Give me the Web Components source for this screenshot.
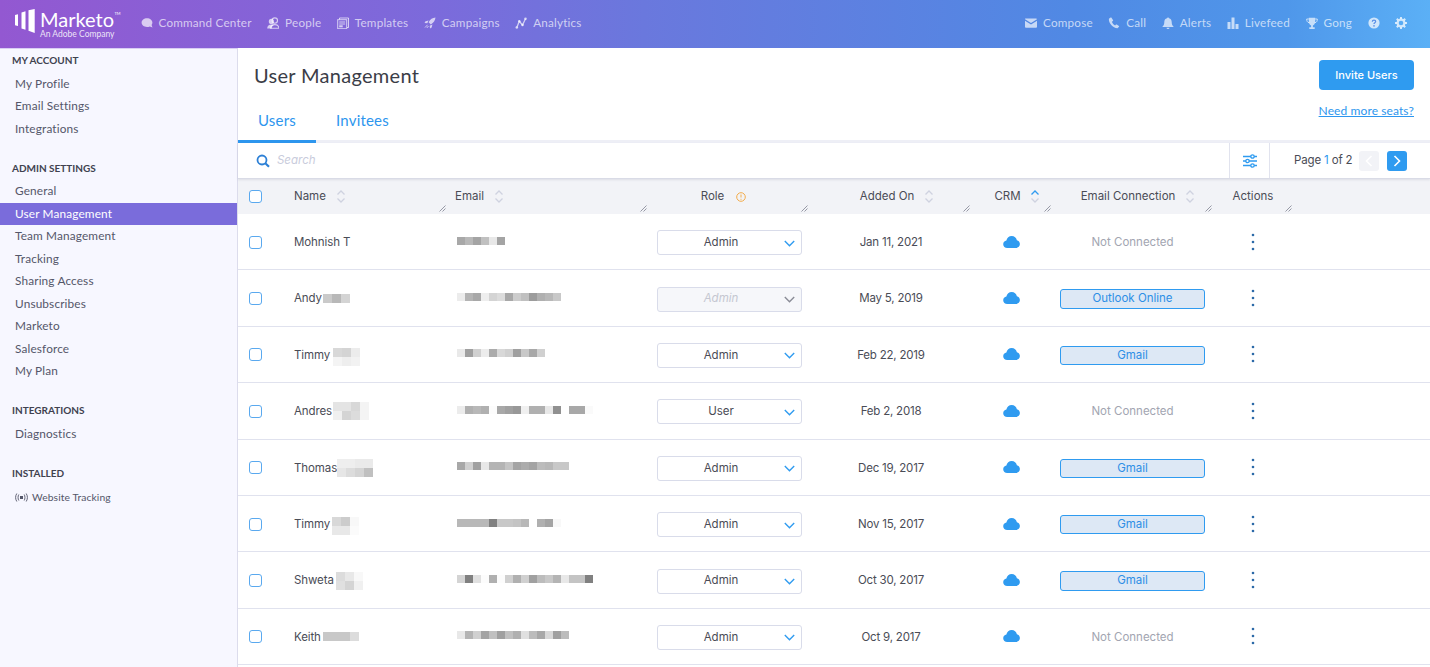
<!DOCTYPE html>
<html>
<head>
<meta charset="utf-8">
<title>User Management</title>
<style>
  html, body { margin: 0; height: 100%; overflow: hidden; background: #fff; }
  body { font-family: Inter, "Liberation Sans", sans-serif; color: #4a4c56; }
</style>
</head>
<body>
<mk-app></mk-app>

<script>
const ICONS = {
  chat: '<path d="M6 1.2c3 0 5.4 1.9 5.4 4.4 0 1 -.3 1.8 -.8 2.5l.9 2.3 -2.7 -1c-.8.4 -1.8.6 -2.8.6 -3 0 -5.4 -1.9 -5.4 -4.4S3 1.2 6 1.2z" fill="currentColor"/>',
  people: '<circle cx="7.8" cy="3.6" r="2.7" fill="none" stroke="currentColor" stroke-width="1.1"/><path d="M3.6 11.2c.1 -2.3 1.9 -3.6 4.2 -3.6s4 1.3 4.1 3.6z" fill="none" stroke="currentColor" stroke-width="1.1"/><circle cx="4.4" cy="4.4" r="2.6" fill="currentColor"/><path d="M.2 11.4c0 -2.4 1.8 -4 4.2 -4 1 0 1.8.3 2.4.7 -1.3.8 -2 1.9 -2 3.3z" fill="currentColor"/>',
  templates: '<path d="M2.5 2.5V1h9v9.5H10" fill="none" stroke="currentColor" stroke-width="1"/><rect x=".7" y="2.7" width="9" height="9" fill="none" stroke="currentColor" stroke-width="1"/><path d="M2.2 5h6M2.2 7h6" stroke="currentColor" stroke-width="1"/><rect x="2.2" y="8.3" width="3.5" height="2" fill="currentColor"/>',
  rocket: '<path d="M11.5.5c-3 .3 -5.3 1.8 -6.9 4.7l2.2 2.2c2.9 -1.6 4.4 -3.9 4.7 -6.9z" fill="currentColor"/><path d="M4.6 3.6L1.5 4.3 .5 6l2.8.3zM8.4 7.4l-.7 3.1 -1.7 1 -.3 -2.8z" fill="currentColor"/><path d="M3.6 7.8L1 10.5M4.5 9L2.8 11" stroke="currentColor" stroke-width=".9"/>',
  analytics: '<path d="M1.8 10.5L4.3 4.3 7.5 8 10.5 1.8" fill="none" stroke="currentColor" stroke-width="1.3"/><circle cx="1.8" cy="10.5" r="1.3" fill="currentColor"/><circle cx="4.3" cy="4.3" r="1.3" fill="currentColor"/><circle cx="7.5" cy="8" r="1.3" fill="currentColor"/><circle cx="10.5" cy="1.8" r="1.3" fill="currentColor"/>',
  mail: '<path d="M0 2.2C0 1.6.4 1.5 1 1.5h10c.6 0 1 .2 1 .7L6 6z" fill="currentColor"/><path d="M0 3.8l6 3.8 6 -3.8V10c0 .4 -.4.7 -1 .7H1c-.6 0 -1 -.3 -1 -.7z" fill="currentColor"/>',
  phone: '<path d="M2.6.6L.9 1.8C.3 5.8 5.2 11.5 9.5 11.3l1.5 -1.5c.3 -.3.2 -.7 -.1 -.9L8.8 7.5c-.3 -.2 -.6 -.1 -.8.1l-.9 1C5.7 7.9 4.3 6.2 3.9 4.8l1 -.7c.3 -.2.3 -.5.2 -.8L3.5.8C3.3.5 2.9.4 2.6.6z" fill="currentColor"/>',
  bell: '<path d="M6 .4c.6 0 1 .4 1 .9 1.8.4 2.7 1.9 2.7 3.7 0 2.3.6 3.4 1.8 4.5v.6H.5v-.6C1.7 8.4 2.3 7.3 2.3 5c0 -1.8.9 -3.3 2.7 -3.7 0 -.5.4 -.9 1 -.9zM4.5 10.700h3C7.500 11.500 6.800 12 6 12s-1.500 -.5 -1.500 -1.300z" fill="currentColor"/>',
  bars: '<rect x=".5" y="5" width="3" height="7" fill="currentColor"/><rect x="4.5" y=".5" width="3" height="11.5" fill="currentColor"/><rect x="8.5" y="7" width="3" height="5" fill="currentColor"/>',
  trophy: '<path d="M2.8.8h6.4v4c0 2 -1.3 3.3 -2.3 3.6v1.8h1.8V12H3.3v-1.8h1.8V8.4C4.1 8.1 2.8 6.8 2.8 4.8z" fill="currentColor"/><path d="M2.8 2H.7c0 2 .6 3.4 2.5 3.8M9.2 2h2.100c0 2 -.6 3.400 -2.500 3.800" fill="none" stroke="currentColor" stroke-width="1"/>',
  help: '<circle cx="6" cy="6" r="5.6" fill="currentColor"/><path d="M4.300 4.700c0 -1 .8 -1.500 1.700 -1.500s1.700.5 1.700 1.400c0 1.200 -1.700 1.200 -1.700 2.500" fill="none" stroke="#5a8fe6" stroke-width="1.2"/><circle cx="6" cy="8.900" r=".8" fill="#5a8fe6"/>',
  gear: '<circle cx="6" cy="6" r="3.400" fill="none" stroke="currentColor" stroke-width="2.2"/><g stroke="currentColor" stroke-width="2"><path d="M6 0v2M6 10v2M0 6h2M10 6h2M1.800 1.800l1.400 1.400M8.800 8.800l1.400 1.400M10.200 1.800L8.800 3.200M3.200 8.800l-1.400 1.400"/></g>',
  search: '<circle cx="6" cy="6" r="4.500" fill="none" stroke="currentColor" stroke-width="1.8"/><path d="M9.300 9.300l3.700 3.500" stroke="currentColor" stroke-width="2.2"/>',
  sliders: '<path d="M0 2.500h14M0 7h14M0 11.500h14" stroke="currentColor" stroke-width="1.3"/><circle cx="9.500" cy="2.500" r="1.700" fill="#fff" stroke="currentColor" stroke-width="1.3"/><circle cx="4.500" cy="7" r="1.700" fill="#fff" stroke="currentColor" stroke-width="1.3"/><circle cx="9.500" cy="11.500" r="1.700" fill="#fff" stroke="currentColor" stroke-width="1.3"/>',
  cloud: '<path d="M4.200 13C1.900 13 .2 11.400 .2 9.300c0 -1.900 1.400 -3.400 3.200 -3.700C3.900 2.800 6 1 8.700 1c2.600 0 4.700 1.700 5.200 4.300 1.700.4 3 1.900 3 3.800 0 2.200 -1.700 3.900 -4 3.900z" fill="currentColor"/>',
  broadcast: '<rect x="5" y="3" width="3" height="3" fill="currentColor"/><path d="M3.800 1.500C2.800 3 2.800 6 3.800 7.500M9.200 1.500C10.200 3 10.200 6 9.200 7.500M1.800 .5C.2 3 .2 6 1.800 8.500M11.200 .5C12.800 3 12.800 6 11.200 8.500" fill="none" stroke="currentColor" stroke-width=".9"/>'
};

class MkIcon extends HTMLElement {
  connectedCallback() {
    let name = this.getAttribute('name');
    let w = this.getAttribute('w') || 12;
    let h = this.getAttribute('h') || w;
    let box = this.getAttribute('box') || `0 0 ${w} ${h}`;
    this.attachShadow({mode: 'open'}).innerHTML = `
      <style>:host { display: inline-flex; flex: none; } svg { display: block; }</style>
      <svg width="${w}" height="${h}" viewBox="${box}">${ICONS[name]}</svg>`;
  }
}

// Redacted text in the screenshot is a mosaic of grey squares. v="cc,d4|ee,f0"
class BlurBar extends HTMLElement {
  connectedCallback() {
    let size = this.getAttribute('size') || 8;
    let rows = this.getAttribute('v').split('|').map(row =>
      `<div class="r">${row.split(',').map(c => `<i style="background:#${c}${c}${c}"></i>`).join('')}</div>`
    ).join('');
    this.attachShadow({mode: 'open'}).innerHTML = `
      <style>
        :host { display: inline-block; flex: none; }
        .r { display: flex; }
        i { display: block; width: ${size}px; height: ${size}px; }
      </style>${rows}`;
  }
}

class NavItem extends HTMLElement {
  connectedCallback() {
    this.attachShadow({mode: 'open'}).innerHTML = `
      <style>
        :host { display: flex; align-items: center; gap: 6px; font: 400 11.7px/1 Lato, sans-serif; letter-spacing: .2px; color: rgba(255,255,255,.68); white-space: nowrap; }
      </style>
      <mk-icon name="${this.getAttribute('icon')}"></mk-icon><slot></slot>`;
  }
}

class MkHeader extends HTMLElement {
  connectedCallback() {
    this.attachShadow({mode: 'open'}).innerHTML = `
      <style>
        :host { display: flex; align-items: center; height: 48px; flex: none; padding: 0 23px 0 14px; box-sizing: border-box;
          background: linear-gradient(90deg, #9358d1 0%, #7c6adb 30%, #6a78dd 45%, #5089e4 75%, #4f97ea 90%, #5bb0f6 100%); }
        .logo { display: flex; align-items: flex-start; width: 107px; margin-right: 19.5px; color: #fff; height: 30px; }
        .mark { flex: none; margin: 0 5px 0 0; }
        .word { position: relative; font: 400 20px/21px Lato, sans-serif; }
        .word small { display: block; font-size: 8.5px; line-height: 9px; text-align: right; margin-top: -.5px; color: rgba(255,255,255,.85); }
        .tm { position: absolute; font-size: 4px; line-height: 4px; top: 3px; left: 100%; }
        nav { display: flex; align-items: center; gap: 15.5px; margin-bottom: 2px; }
        .grow { flex: 1; }
        mk-icon { color: rgba(255,255,255,.72); }
      </style>
      <div class="logo">
        <svg class="mark" width="21" height="24" viewBox="0 0 21 24"><path d="M1 6l3 -.8v11.800l-3 -.7zM7.500 3.500l4 -1.200v18.500l-4 -1.200zM14.500 1.300l6.200 -1.300v24l-6.200 -2.200z" fill="#fff"/></svg>
        <div class="word">Marketo<span class="tm">TM</span><small>An Adobe Company</small></div>
      </div>
      <nav>
        <nav-item icon="chat">Command Center</nav-item>
        <nav-item icon="people">People</nav-item>
        <nav-item icon="templates">Templates</nav-item>
        <nav-item icon="rocket">Campaigns</nav-item>
        <nav-item icon="analytics">Analytics</nav-item>
      </nav>
      <div class="grow"></div>
      <nav>
        <nav-item icon="mail">Compose</nav-item>
        <nav-item icon="phone">Call</nav-item>
        <nav-item icon="bell">Alerts</nav-item>
        <nav-item icon="bars">Livefeed</nav-item>
        <nav-item icon="trophy">Gong</nav-item>
        <mk-icon name="help"></mk-icon>
        <mk-icon name="gear"></mk-icon>
      </nav>`;
  }
}

class SideSection extends HTMLElement {
  connectedCallback() {
    this.attachShadow({mode: 'open'}).innerHTML = `
      <style>
        :host { display: block; margin-bottom: 17.5px; }
        h4 { margin: 0; padding-left: 12px; height: 22.5px; font: 700 10px/20.5px Lato, sans-serif; color: #40424f; }
      </style>
      <h4>${this.getAttribute('title')}</h4><slot></slot>`;
  }
}

class SideItem extends HTMLElement {
  connectedCallback() {
    let active = this.hasAttribute('active');
    this.attachShadow({mode: 'open'}).innerHTML = `
      <style>
        :host { display: flex; align-items: center; gap: 4px; height: 22.5px; padding-left: 15px; font: 400 11.8px/1 Lato, sans-serif; letter-spacing: .15px;
          color: ${active ? '#fff' : '#545669'}; background: ${active ? '#7a6cdb' : 'none'}; }
        :host([small]) { font-size: 10.3px; letter-spacing: .1px; box-sizing: border-box; padding-top: 1px; height: 24px; }
      </style><slot></slot>`;
  }
}

class MkSidebar extends HTMLElement {
  connectedCallback() {
    this.attachShadow({mode: 'open'}).innerHTML = `
      <style>
        :host { display: block; width: 238px; flex: none; box-sizing: border-box; padding-top: 1px; background: #f7f7ff; border-right: 1px solid #dcdcec; border-top: 1px solid #d9cdf4; }
      </style>
      <side-section title="MY ACCOUNT">
        <side-item>My Profile</side-item>
        <side-item>Email Settings</side-item>
        <side-item>Integrations</side-item>
      </side-section>
      <side-section title="ADMIN SETTINGS">
        <side-item>General</side-item>
        <side-item active>User Management</side-item>
        <side-item>Team Management</side-item>
        <side-item>Tracking</side-item>
        <side-item>Sharing Access</side-item>
        <side-item>Unsubscribes</side-item>
        <side-item>Marketo</side-item>
        <side-item>Salesforce</side-item>
        <side-item>My Plan</side-item>
      </side-section>
      <side-section title="INTEGRATIONS">
        <side-item>Diagnostics</side-item>
      </side-section>
      <side-section title="INSTALLED">
        <side-item small><mk-icon name="broadcast" w="13" h="9" box="0 0 13 9"></mk-icon>Website Tracking</side-item>
      </side-section>`;
  }
}

class PageHead extends HTMLElement {
  connectedCallback() {
    this.attachShadow({mode: 'open'}).innerHTML = `
      <style>
        :host { display: flex; justify-content: space-between; height: 95px; flex: none; box-sizing: border-box; border-bottom: 3px solid #eeeff6; }
        h1 { margin: 17px 0 0 16px; font: 400 20px/21px Lato, sans-serif; color: #3b3d47; letter-spacing: .3px; }
        .left { display: flex; flex-direction: column; justify-content: space-between; }
        .tabs { display: flex; margin-bottom: -3px; }
        .tab { padding: 0 20px; height: 37px; font: 400 15px/29px Lato, sans-serif; letter-spacing: .2px; color: #2d96ee; box-sizing: border-box; }
        .tab.on { border-bottom: 3px solid #2d96ee; }
        .right { display: flex; flex-direction: column; align-items: flex-end; padding: 12px 16px 0 0; }
        button { width: 95px; height: 30px; border: 0; border-radius: 4px; background: #2f9bf0; color: #fff; font: 500 11px/30px Inter, sans-serif; padding: 0; }
        a { margin-top: 13px; font: 400 12px/15px Lato, sans-serif; letter-spacing: .1px; color: #2d96ee; text-decoration: underline; }
      </style>
      <div class="left">
        <h1>User Management</h1>
        <div class="tabs"><div class="tab on">Users</div><div class="tab">Invitees</div></div>
      </div>
      <div class="right">
        <button>Invite Users</button>
        <a>Need more seats?</a>
      </div>`;
  }
}

class SearchBar extends HTMLElement {
  connectedCallback() {
    this.attachShadow({mode: 'open'}).innerHTML = `
      <style>
        :host { display: flex; align-items: stretch; height: 36px; flex: none; box-sizing: border-box; border-bottom: 1px solid #d9dbe6; box-shadow: 0 1px 2px rgba(120,125,150,.18); position: relative; z-index: 1; }
        .q { flex: 1; display: flex; align-items: center; gap: 7px; padding-left: 18px; color: #2d80d6; }
        .q span { font: italic 400 11.5px/1 Inter, sans-serif; color: #c9ccdc; }
        .cfg { width: 39px; display: flex; align-items: center; justify-content: center; border-left: 1px solid #e1e3ee; border-right: 1px solid #e1e3ee; color: #2f9bf0; }
        .pg { width: 160px; box-sizing: border-box; display: flex; align-items: center; padding: 0 23px 0 24px; font: 400 11.5px/1 Inter, sans-serif; letter-spacing: -.15px; color: #4a4c56; white-space: nowrap; }
        .pg b { font-weight: 400; color: #2d96ee; }
        .btn { width: 20px; height: 20px; border-radius: 3px; background: #f2f3f7; color: #fff; display: flex; align-items: center; justify-content: center; }
        .btn.prev { margin-left: auto; }
        .btn.next { margin-left: 8px; background: #2f9bf0; }
        svg { display: block; }
      </style>
      <div class="q"><mk-icon name="search" w="14" h="14"></mk-icon><span>Search</span></div>
      <div class="cfg"><mk-icon name="sliders" w="14" h="14"></mk-icon></div>
      <div class="pg">Page&nbsp;<b>1</b>&nbsp;of 2
        <div class="btn prev"><svg width="8" height="12" viewBox="0 0 8 12"><path d="M6.5 1L1.5 6l5 5" fill="none" stroke="currentColor" stroke-width="1.6"/></svg></div>
        <div class="btn next"><svg width="8" height="12" viewBox="0 0 8 12"><path d="M1.5 1l5 5 -5 5" fill="none" stroke="currentColor" stroke-width="1.6"/></svg></div>
      </div>`;
  }
}

const COLS = '56px 154px 201px 161px 162px 81px 161px 80px 1fr';

class HeadCell extends HTMLElement {
  connectedCallback() {
    let sort = this.getAttribute('sort');
    let up = sort === 'up' ? '#2f9bf0' : '#cfd2e0';
    let icon = '';
    if (sort) {
      icon = `<svg class="ic" width="10" height="15" viewBox="0 0 10 15"><path d="M1.5 5.5L5 2l3.5 3.5" fill="none" stroke="${up}" stroke-width="1.3"/><path d="M1.5 9.5L5 13l3.5 -3.5" fill="none" stroke="#cfd2e0" stroke-width="1.3"/></svg>`;
    } else if (this.hasAttribute('warn')) {
      icon = `<svg class="ic" width="10" height="10" viewBox="0 0 10 10"><circle cx="5" cy="5" r="4.3" fill="none" stroke="#f3ac4c" stroke-width="1"/><path d="M5 2.5v3M5 6.8v1" stroke="#f3ac4c" stroke-width="1"/></svg>`;
    }
    this.attachShadow({mode: 'open'}).innerHTML = `
      <style>
        :host { display: flex; align-items: center; position: relative; box-sizing: border-box; gap: var(--gap, 10px); justify-content: ${this.hasAttribute('left') ? 'flex-start' : 'center'}; font: 400 11.5px/1 Inter, sans-serif; color: #4a4c56; white-space: nowrap; padding: 0 var(--pr, 0) 0 var(--pl, 0); }
        .grip { position: absolute; right: 2px; bottom: 2px; }
        .ic { flex: none; }
      </style>
      <slot></slot>${icon}
      <svg class="grip" width="7" height="7" viewBox="0 0 7 7"><path d="M.5 6.5l6 -6M3.5 6.5l3 -3" stroke="#7f8290" stroke-width=".8" fill="none"/></svg>`;
  }
}

class MkCheck extends HTMLElement {
  connectedCallback() {
    this.attachShadow({mode: 'open'}).innerHTML = `
      <style>
        :host { display: block; width: 13px; height: 13px; margin-left: 11px; box-sizing: border-box; border: 1px solid #5aa9ef; border-radius: 3px; background: #fff; }
      </style>`;
  }
}

class RoleSelect extends HTMLElement {
  connectedCallback() {
    let off = this.hasAttribute('disabled');
    this.attachShadow({mode: 'open'}).innerHTML = `
      <style>
        :host { display: flex; align-items: center; width: 145px; height: 25px; box-sizing: border-box; border: 1px solid #d9dcea; border-radius: 3px; background: ${off ? '#f6f7fa' : '#fff'}; }
        span { flex: 1; text-align: center; font: ${off ? 'italic' : 'normal'} 400 11.5px/1 Inter, sans-serif; color: ${off ? '#c5c7d1' : '#4a4c56'}; }
        svg { display: block; margin: 1px 6px 0 0; }
      </style>
      <span><slot></slot></span>
      <svg width="11" height="7" viewBox="0 0 11 7"><path d="M.8 1l4.7 4.7L10.2 1" fill="none" stroke="${off ? '#8a8c96' : '#2f9bf0'}" stroke-width="1.4"/></svg>`;
  }
}

class MailPill extends HTMLElement {
  connectedCallback() {
    this.attachShadow({mode: 'open'}).innerHTML = `
      <style>
        :host { display: block; width: 145px; height: 19.5px; box-sizing: border-box; border: 1px solid #2f9bf0; border-radius: 3px; background: #dde8f5; color: #2d8fe6; font: 400 11.5px/17.5px Inter, sans-serif; text-align: center; }
      </style><slot></slot>`;
  }
}

class UserRow extends HTMLElement {
  connectedCallback() {
    let nb = this.getAttribute('nb');
    let conn = this.getAttribute('conn');
    let role = this.getAttribute('role-name') || 'Admin';
    this.attachShadow({mode: 'open'}).innerHTML = `
      <style>
        :host { display: grid; grid-template-columns: ${COLS}; align-items: center; height: 56.4px; padding-top: 2px; box-sizing: border-box; border-bottom: 1px solid #e0e2ee; font: 400 11.5px/1 Inter, sans-serif; color: #4a4c56; }
        mk-check { margin-top: -1px; }
        .nm { display: flex; align-items: center; letter-spacing: -.1px; }
        .nm span { min-width: ${this.getAttribute('nx') || 0}px; }
        .em { padding-left: 9px; display: flex; margin-top: -4px; }
        .c { display: flex; justify-content: center; }
        .s { padding-right: 2px; }
        .cl { margin-top: -2px; }
        .off { color: #a2a5b1; }
        .dots { color: #2c6aa8; margin-top: -2px; }
        svg { display: block; }
      </style>
      <mk-check></mk-check>
      <div class="nm"><span>${this.getAttribute('name')}</span>${nb ? `<blur-bar v="${nb}" size="9" style="margin-top:${this.getAttribute('nt') || -1}px"></blur-bar>` : ''}</div>
      <div class="em"><blur-bar v="${this.getAttribute('em')}"></blur-bar></div>
      <div class="c"><role-select ${this.hasAttribute('locked') ? 'disabled' : ''}>${role}</role-select></div>
      <div class="c" style="letter-spacing:-.2px">${this.getAttribute('added')}</div>
      <div class="c s cl"><mk-icon name="cloud" w="17" h="14" style="color:#2f9bf0"></mk-icon></div>
      <div class="c s">${conn ? `<mail-pill>${conn}</mail-pill>` : '<span class="off">Not Connected</span>'}</div>
      <div class="c s dots"><svg width="4" height="18" viewBox="0 0 4 18"><circle cx="2" cy="2" r="1.3" fill="currentColor"/><circle cx="2" cy="9" r="1.3" fill="currentColor"/><circle cx="2" cy="16" r="1.3" fill="currentColor"/></svg></div>`;
  }
}

class UserTable extends HTMLElement {
  connectedCallback() {
    this.attachShadow({mode: 'open'}).innerHTML = `
      <style>
        :host { display: block; flex: 1; min-height: 0; overflow: hidden; }
        .head { display: grid; grid-template-columns: ${COLS}; align-items: stretch; height: 35px; background: #f2f3f7; }
        .head mk-check { align-self: center; }
      </style>
      <div class="head">
        <mk-check></mk-check>
        <head-cell left sort="both">Name</head-cell>
        <head-cell left sort="both" style="--pl:7px">Email</head-cell>
        <head-cell warn style="--gap:12px;--pr:12px">Role</head-cell>
        <head-cell sort="both" style="--pl:12px">Added On</head-cell>
        <head-cell sort="up" style="--gap:9px;--pl:9px">CRM</head-cell>
        <head-cell sort="both" style="--pl:9px">Email Connection</head-cell>
        <head-cell style="--pr:2px">Actions</head-cell>
      </div>
      <user-row name="Mohnish T" em="a8,b8,a4,c0,e8,a4" added="Jan 11, 2021"></user-row>
      <user-row name="Andy" nx="29" nb="ca,b8,d4" em="ec,b4,a8,ee,d4,dc,a8,cc,c0,9c,b0,b8,c8" added="May 5, 2019" conn="Outlook Online" locked></user-row>
      <user-row name="Timmy" nx="39" nt="4" nb="d8,d4,ec|f4,ee,f2" em="e9,a0,d0,ec,ab,d8,d0,a0,c8,a8,d0" added="Feb 22, 2019" conn="Gmail"></user-row>
      <user-row name="Andres" nx="39" nb="e4,e4,d8,f4|f0,d4,dc,f4" em="ec,b0,b8,b0,fc,a8,a0,98,f0,b0,b0,e8,90,ff,a8,a8,fa" role-name="User" added="Feb 2, 2018"></user-row>
      <user-row name="Thomas" nx="43" nb="ee,ee,ea,ea|e6,dc,d4,c0" em="a8,d0,a0,e8,b4,b4,c4,a4,ac,a4,bc,b8,c8,c8" added="Dec 19, 2017" conn="Gmail"></user-row>
      <user-row name="Timmy" nx="38" nt="3" nb="d8,cc,f8|e8,e8,fb" em="b8,b8,b8,b8,80,c8,c8,c4,b8,ff,b0,a4,f8" added="Nov 15, 2017" conn="Gmail"></user-row>
      <user-row name="Shweta" nx="42" nb="dc,e8,f8|e0,d4,f0" em="d4,80,e0,fc,b0,fc,d0,b0,d0,a0,bc,c8,b4,e8,c4,c4,80" added="Oct 30, 2017" conn="Gmail"></user-row>
      <user-row name="Keith" nx="29" nb="c8,c8,c8,dc" em="e8,b4,d0,a4,c0,a0,c0,b0,e0,bc,a8,d8,a0,bc" added="Oct 9, 2017"></user-row>`;
  }
}

class MkApp extends HTMLElement {
  connectedCallback() {
    this.attachShadow({mode: 'open'}).innerHTML = `
      <style>
        :host { display: flex; flex-direction: column; height: 100vh; overflow: hidden; }
        .body { display: flex; flex: 1; min-height: 0; }
        main { flex: 1; min-width: 0; display: flex; flex-direction: column; }
      </style>
      <mk-header></mk-header>
      <div class="body">
        <mk-sidebar></mk-sidebar>
        <main>
          <page-head></page-head>
          <search-bar></search-bar>
          <user-table></user-table>
        </main>
      </div>`;
  }
}

customElements.define('mk-icon', MkIcon);
customElements.define('blur-bar', BlurBar);
customElements.define('nav-item', NavItem);
customElements.define('mk-header', MkHeader);
customElements.define('side-section', SideSection);
customElements.define('side-item', SideItem);
customElements.define('mk-sidebar', MkSidebar);
customElements.define('page-head', PageHead);
customElements.define('search-bar', SearchBar);
customElements.define('head-cell', HeadCell);
customElements.define('mk-check', MkCheck);
customElements.define('role-select', RoleSelect);
customElements.define('mail-pill', MailPill);
customElements.define('user-row', UserRow);
customElements.define('user-table', UserTable);
customElements.define('mk-app', MkApp);
</script>
</body>
</html>
